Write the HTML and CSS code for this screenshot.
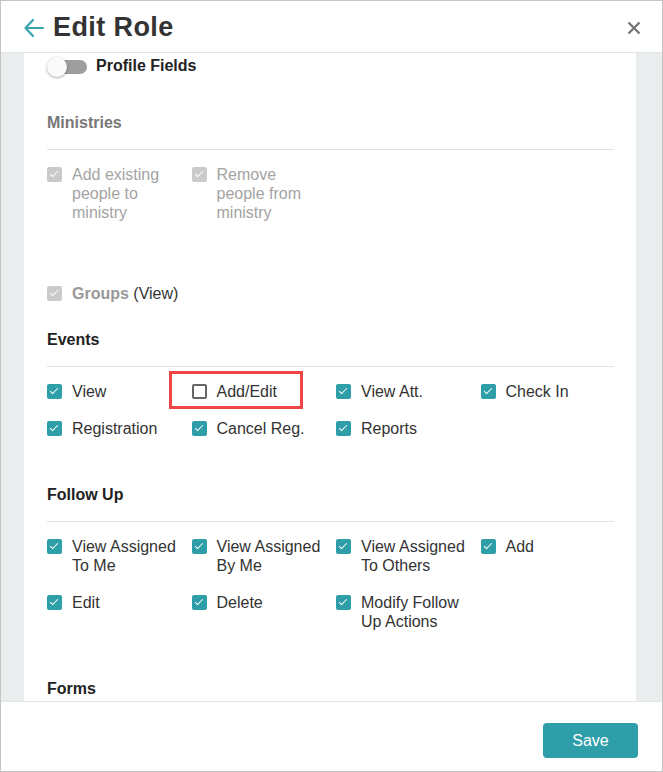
FILE: index.html
```html
<!DOCTYPE html>
<html lang="en">
<head>
  <meta charset="UTF-8">
  <meta name="viewport" content="width=device-width, initial-scale=1.0">
  <title>Edit Role</title>
  <link rel="stylesheet" href="styles.css">
</head>
<body>

  <div class="modal">
    <!-- Header -->
    <div class="modal-header">
      <div class="title">
        <svg class="back" width="22" height="22" viewBox="0 0 22 22">
          <path d="M20 11H3M10 3L2.5 11L10 19" fill="none" stroke="#3aa3ad" stroke-width="2.2" stroke-linecap="round" stroke-linejoin="round"/>
        </svg>
        <h1>Edit Role</h1>
      </div>
      <svg class="close" width="14" height="14" viewBox="0 0 14 14">
        <path d="M1.5 1.5L12.5 12.5M12.5 1.5L1.5 12.5" stroke="#777" stroke-width="2.4"/>
      </svg>
    </div>

    <div class="modal-body">
      <div class="card">

        <div class="toggle-row">
          <span class="toggle"><span class="knob"></span></span>
          <span class="toggle-label">Profile Fields</span>
        </div>

        <!-- Ministries -->
        <h3 class="section-title disabled ministries">Ministries</h3>
        <div class="options">
          <label class="check disabled"><span class="box on"></span><span class="text">Add existing people to ministry</span></label>
          <label class="check disabled"><span class="box on"></span><span class="text">Remove people from ministry</span></label>
        </div>

        <label class="check disabled groups"><span class="box on"></span><span class="text"><b>Groups</b> <span class="view">(View)</span></span></label>

        <!-- Events -->
        <h3 class="section-title events">Events</h3>
        <div class="options">
          <label class="check"><span class="box on"></span><span class="text">View</span></label>
          <label class="check highlighted"><span class="box"></span><span class="text">Add/Edit</span></label>
          <label class="check"><span class="box on"></span><span class="text">View Att.</span></label>
          <label class="check"><span class="box on"></span><span class="text">Check In</span></label>
          <label class="check"><span class="box on"></span><span class="text">Registration</span></label>
          <label class="check"><span class="box on"></span><span class="text">Cancel Reg.</span></label>
          <label class="check"><span class="box on"></span><span class="text">Reports</span></label>
        </div>

        <!-- Follow Up -->
        <h3 class="section-title follow">Follow Up</h3>
        <div class="options">
          <label class="check"><span class="box on"></span><span class="text">View Assigned To Me</span></label>
          <label class="check"><span class="box on"></span><span class="text">View Assigned By Me</span></label>
          <label class="check"><span class="box on"></span><span class="text">View Assigned To Others</span></label>
          <label class="check"><span class="box on"></span><span class="text">Add</span></label>
          <label class="check"><span class="box on"></span><span class="text">Edit</span></label>
          <label class="check"><span class="box on"></span><span class="text">Delete</span></label>
          <label class="check"><span class="box on"></span><span class="text">Modify Follow Up Actions</span></label>
        </div>

        <!-- Forms -->
        <h3 class="section-title forms">Forms</h3>

      </div>
    </div>

    <!-- Footer -->
    <div class="modal-footer">
      <button type="button">Save</button>
    </div>
  </div>

</body>
</html>
```

FILE: styles.css
```css
body {
  margin: 0;
  font-family: "Liberation Sans", Arial, sans-serif;
  color: #333;
  background-color: #fff;
}

.modal {
  width: 663px;
  height: 772px;
  box-sizing: border-box;
  border: 1px solid #c4c4c4;
  display: flex;
  flex-direction: column;
  overflow: hidden;
}

/* Header */
.modal-header {
  height: 52px;
  box-sizing: border-box;
  border-bottom: 1px solid #e3e6e8;
  display: flex;
  align-items: center;
  justify-content: space-between;
  padding: 0 21px 0 22px;
  flex-shrink: 0;
}

.title {
  display: flex;
  align-items: center;
  gap: 8px;
}

.back {
  margin-top: 2px;
}

h1 {
  margin: 0;
  font-size: 27px;
  font-weight: bold;
  letter-spacing: 0.4px;
  color: #333;
  line-height: 32px;
}

.close {
  margin-top: 2px;
}

/* Body */
.modal-body {
  flex: 1;
  overflow: hidden;
  background-color: #e9edee;
  padding: 0 26px 0 23px;
}

.card {
  background-color: white;
  padding: 3px 22px 40px 23px;
}

.toggle-row {
  display: flex;
  align-items: center;
  height: 20px;
  gap: 9px;
}

.toggle {
  position: relative;
  display: block;
  width: 40px;
  height: 20px;
  margin-top: 2px;
}

.toggle::before {
  content: "";
  position: absolute;
  left: 3px;
  top: 3px;
  width: 37px;
  height: 14px;
  border-radius: 7px;
  background-color: #9e9e9e;
}

.knob {
  position: absolute;
  left: 0;
  top: 0;
  width: 20px;
  height: 20px;
  border-radius: 50%;
  background-color: #fafafa;
  box-shadow: 0 1px 3px rgba(0, 0, 0, 0.35);
}

.toggle-label {
  font-weight: bold;
  font-size: 16px;
  color: #222;
}

.section-title {
  margin: 0;
  font-size: 16px;
  line-height: 18px;
  font-weight: bold;
  color: #222;
  padding-top: 1px;
  padding-bottom: 17px;
  border-bottom: 1px solid #e0e0e0;
}

.section-title.disabled {
  color: #777;
}

.ministries { margin-top: 37px; }
.events { margin-top: 27px; }
.follow { margin-top: 47px; }
.forms { margin-top: 48px; }

.options {
  display: grid;
  grid-template-columns: repeat(4, 144.5px);
  row-gap: 18px;
  margin-top: 15px;
}

.check {
  position: relative;
  display: flex;
  align-items: flex-start;
  gap: 10px;
  font-size: 16px;
  line-height: 19px;
  color: #333;
}

.check .text {
  max-width: 108px;
}

.box {
  position: relative;
  flex-shrink: 0;
  width: 15px;
  height: 15px;
  margin-top: 2px;
  box-sizing: border-box;
  border: 2px solid #666;
  border-radius: 2px;
  background-color: white;
}

.box.on {
  border: none;
  background-color: #2e9ea8;
}

.box.on::after {
  content: "";
  position: absolute;
  left: 5px;
  top: 2px;
  width: 3px;
  height: 7px;
  border: solid white;
  border-width: 0 1.5px 1.5px 0;
  transform: rotate(45deg);
}

.check.disabled {
  color: #a3a3a3;
}

.check.disabled .box.on {
  background-color: #cacaca;
}

.groups {
  margin-top: 62px;
}

.groups .text {
  max-width: none;
}

.groups b {
  color: #999;
}

.groups .view {
  color: #333;
}

/* Red annotation box round Add/Edit */
.highlighted::before {
  content: "";
  position: absolute;
  left: -23px;
  top: -11px;
  width: 134px;
  height: 38px;
  box-sizing: border-box;
  border: 3px solid #f04545;
}

/* Footer */
.modal-footer {
  height: 70px;
  box-sizing: border-box;
  border-top: 1px solid #e3e6e8;
  display: flex;
  justify-content: flex-end;
  align-items: flex-start;
  padding: 21px 24px 0 0;
  flex-shrink: 0;
}

button {
  width: 95px;
  height: 35px;
  background-color: #2e9ea8;
  color: white;
  border: none;
  border-radius: 4px;
  font-family: "Liberation Sans", Arial, sans-serif;
  font-size: 16px;
  cursor: pointer;
}
```
